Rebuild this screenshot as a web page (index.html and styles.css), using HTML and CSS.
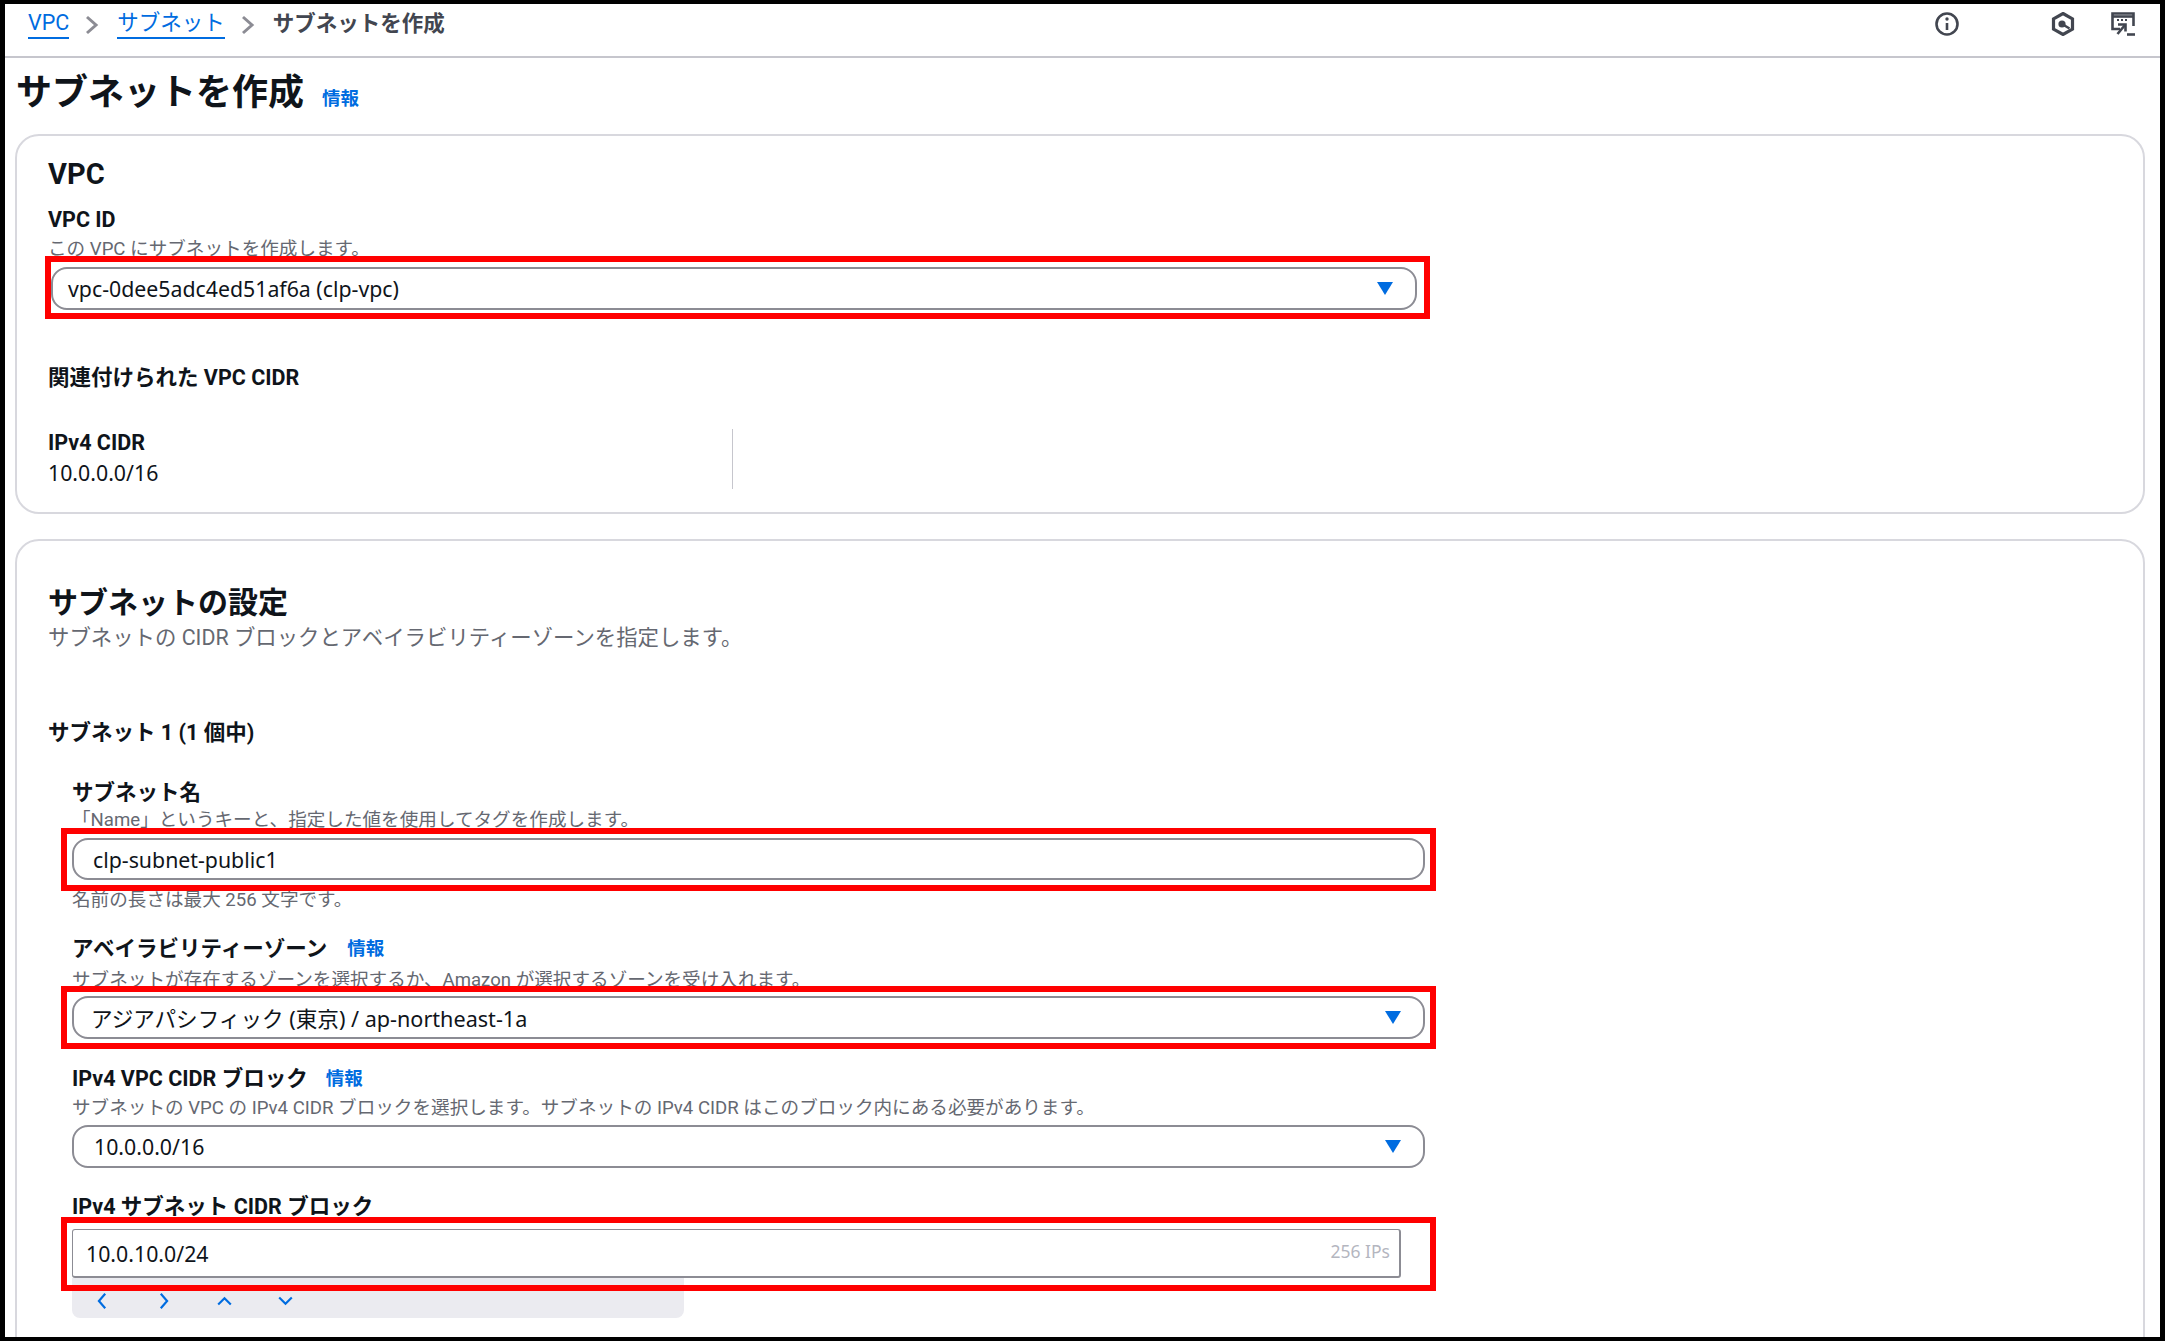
FILE: index.html
```html
<!DOCTYPE html>
<html lang="ja">
<head>
<meta charset="utf-8">
<title>サブネットを作成</title>
<link rel="stylesheet" href="styles.css">
</head>
<body>
<div class="frame">
  <header class="topbar">
    <nav class="crumbs">
      <a class="link under">VPC</a>
      <svg class="crumb-sep" viewBox="0 0 14 20"><path d="M2 2l9 8-9 8"/></svg>
      <a class="link under">サブネット</a>
      <svg class="crumb-sep" viewBox="0 0 14 20"><path d="M2 2l9 8-9 8"/></svg>
      <span class="crumb-now">サブネットを作成</span>
    </nav>
    <div class="tools">
      <svg class="tool tool-info" viewBox="0 0 24 24"><circle class="ln" cx="12" cy="12" r="10.5"/><path class="ln" d="M12 11v7"/><circle class="fl" cx="12" cy="7" r="1.7"/></svg>
      <svg class="tool tool-hex" viewBox="0 0 24 24"><path class="ln hexl" d="M12 1.500l9.500 5.400v10.200L12 22.500l-9.500-5.400V6.900z"/><circle class="fl" cx="11" cy="12" r="3.600"/><path class="ln" d="M11 12l7.500 4.500"/></svg>
      <svg class="tool tool-con" viewBox="0 0 24 24"><path class="ln" d="M9 17H1.500V1.500h21V14"/><path class="ln" d="M1 4.500h22" /><path class="fl" d="M6 7h2v2H6zM10 7h2v2h-2zM14 7h2v2h-2z"/><path class="ln" d="M7 12.500h7.500v7"/><path class="ln" d="M14 13L6.500 22"/><path class="ln" d="M16 22.500h8"/></svg>
    </div>
  </header>

  <main class="main">
    <div class="title-row">
      <h1 class="title">サブネットを作成</h1>
      <a class="link info">情報</a>
    </div>

    <section class="card card-vpc">
      <h2 class="h2 h2-vpc">VPC</h2>
      <div class="label mt14">VPC ID</div>
      <div class="sub mt1 nudge">この VPC にサブネットを作成します。</div>
      <div class="hl hl-vpc">
        <div class="box select select-vpc">
          <span>vpc-0dee5adc4ed51af6a (clp-vpc)</span>
          <svg class="caret" viewBox="0 0 16 13"><path d="M0 0h16L8 13z"/></svg>
        </div>
      </div>
      <div class="label mt45">関連付けられた VPC CIDR</div>
      <div class="kv">
        <div class="label">IPv4 CIDR</div>
        <div class="value">10.0.0.0/16</div>
      </div>
    </section>

    <section class="card card-subnet">
      <h2 class="h2 h2-sub">サブネットの設定</h2>
      <div class="sub sub-lg">サブネットの CIDR ブロックとアベイラビリティーゾーンを指定します。</div>
      <div class="label mt68">サブネット 1 (1 個中)</div>

      <div class="fields">
        <div class="label mt30">サブネット名</div>
        <div class="sub">「Name」というキーと、指定した値を使用してタグを作成します。</div>
        <div class="hl hl-name">
          <div class="box input-name">clp-subnet-public1</div>
        </div>
        <div class="sub help">名前の長さは最大 256 文字です。</div>

        <div class="label label-info mt23">アベイラビリティーゾーン<a class="link info-sm">情報</a></div>
        <div class="sub mt3">サブネットが存在するゾーンを選択するか、Amazon が選択するゾーンを受け入れます。</div>
        <div class="hl hl-az">
          <div class="box select select-az">
            <span>アジアパシフィック (東京) / ap-northeast-1a</span>
            <svg class="caret" viewBox="0 0 16 13"><path d="M0 0h16L8 13z"/></svg>
          </div>
        </div>

        <div class="label label-info mt15">IPv4 VPC CIDR ブロック<a class="link info-sm info-cidr">情報</a></div>
        <div class="sub mt1">サブネットの VPC の IPv4 CIDR ブロックを選択します。サブネットの IPv4 CIDR はこのブロック内にある必要があります。</div>
        <div class="box select select-cidr">
          <span>10.0.0.0/16</span>
          <svg class="caret" viewBox="0 0 16 13"><path d="M0 0h16L8 13z"/></svg>
        </div>

        <div class="label mt23">IPv4 サブネット CIDR ブロック</div>
        <div class="hl hl-cidr">
          <div class="box input-cidr">
            <span>10.0.10.0/24</span>
            <span class="ips">256 IPs</span>
          </div>
        </div>
        <div class="keys">
          <svg class="key" viewBox="0 0 20 20"><path d="M13 2L6 10l7 8"/></svg>
          <svg class="key" viewBox="0 0 20 20"><path d="M7 2l7 8-7 8"/></svg>
          <svg class="key" viewBox="0 0 20 20"><path d="M3 14l7-7 7 7"/></svg>
          <svg class="key" viewBox="0 0 20 20"><path d="M3 6l7 7 7-7"/></svg>
        </div>
      </div>
    </section>
  </main>
</div>
</body>
</html>
```
FILE: styles.css
```css
* { box-sizing: border-box; }
html, body { margin: 0; padding: 0; background: #fff; }
body {
  font-family: Roboto, "Noto Sans CJK JP", sans-serif;
  color: #0f141a;
}
.frame {
  width: 2165px;
  height: 1341px;
  overflow: hidden;
  background: #fff;
  border-style: solid;
  border-color: #000;
  border-width: 4px 5px 4px 5px;
}
.link { color: #006ce0; text-decoration: none; }
.under { border-bottom: 2px solid #006ce0; }

.topbar {
  height: 54px;
  display: flex;
  justify-content: space-between;
  align-items: flex-start;
  border-bottom: 2px solid #c6c6cd;
}
.crumbs {
  display: flex;
  align-items: center;
  height: 40px;
  padding-left: 23px;
  font-size: 21.500px;
  line-height: 28px;
}
.crumb-sep {
  width: 14px;
  height: 20px;
  margin: 2px 18px 0 16px;
  fill: none;
  stroke: #8c8c94;
  stroke-width: 3;
}
.crumb-now { font-weight: 700; color: #424650; }
.tools { display: flex; align-items: center; height: 40px; padding-right: 25px; }
.tool { width: 24px; height: 24px; }
.tool .ln { fill: none; stroke: #424650; stroke-width: 2.600; }
.tool .hexl { stroke-width: 3.200; }
.tool .fl { fill: #424650; }
.tool-hex { margin-left: 92px; }
.tool-con { margin-left: 36px; }

.main { padding: 0 15px 40px 10px; }
.title-row { display: flex; align-items: baseline; margin-top: 15px; height: 40px; padding-left: 1px; }
.title { margin: 0; font-size: 36px; line-height: 40px; font-weight: 700; }
.info { margin-left: 18px; font-size: 18.500px; font-weight: 700; }

.card {
  border: 2px solid #d8d8de;
  border-radius: 24px;
  padding: 0 0 0 31px;
  background: #fff;
}
.card-vpc { margin-top: 21px; height: 380px; }
.card-subnet { margin-top: 25px; padding-bottom: 40px; }

.h2 { margin: 0; font-weight: 700; }
.h2-vpc { font-size: 29px; line-height: 36px; padding-top: 20px; height: 56px; }
.h2-sub { font-size: 30px; line-height: 40px; padding-top: 42px; height: 82px; }

.label { font-size: 21.500px; font-weight: 700; line-height: 28px; height: 28px; }
.sub { font-size: 18.600px; line-height: 26px; height: 26px; color: #656871; }
.nudge { padding-top: 1px; }
.sub-lg { font-size: 21.400px; margin-top: 2px; }
.value { font-family: "Noto Sans", "Noto Sans CJK JP", sans-serif; font-size: 21.300px; line-height: 30px; height: 30px; margin-top: 1px; }
.mt1 { margin-top: 1px; }
.mt3 { margin-top: 3px; }
.mt14 { margin-top: 14px; }
.mt15 { margin-top: 15px; }
.mt23 { margin-top: 23px; }
.mt30 { margin-top: 30px; }
.mt45 { margin-top: 45px; }
.mt68 { margin-top: 68px; }

.kv { width: 685px; height: 60px; margin-top: 37px; border-right: 1px solid #c6c6cd; }

.hl { position: relative; z-index: 1; border: 6px solid #ff0000; }
.hl-vpc { width: 1385px; margin: -5px 0 0 -3px; padding: 5px 7px 3px 0; }
.hl-name { width: 1375px; margin: -3px 0 0 -11px; padding: 4px 5px 5px 5px; }
.hl-az { width: 1375px; margin: -5px 0 0 -11px; padding: 4px 5px 4px 5px; }
.hl-cidr { width: 1375px; margin: -2px 0 0 -11px; padding: 6px 29px 7px 5px; }

.box {
  background: #fff;
  border: 2px solid #8c8c94;
  border-radius: 16px;
  font-family: "Noto Sans", "Noto Sans CJK JP", sans-serif;
  font-size: 21.300px;
  display: flex;
  align-items: center;
  justify-content: space-between;
}
.select { height: 43px; padding: 0 22px 0 17px; }
.select-vpc { padding-left: 15px; }
.select-az { padding-left: 17px; font-size: 21.600px; }
.select-cidr { width: 1353px; margin-top: 6px; padding-left: 20px; }
.input-name { height: 42px; padding-left: 19px; }
.input-cidr { height: 49px; padding: 0 9px 0 13px; border-width: 1px 2px 2px 1px; border-radius: 3px; }
.ips { font-family: "Noto Sans", sans-serif; font-size: 17.500px; color: #b4b6bf; margin-top: -4px; }
.caret { width: 16px; height: 13px; fill: #006ce0; }

.fields { padding-left: 24px; }
.fields .label, .fields .sub { padding-top: 2px; }
.label-info { display: flex; align-items: center; }
.info-sm { margin-left: 20px; font-size: 18.500px; }
.info-cidr { margin-left: 18px; }
.help { margin-top: -6px; }

.keys {
  width: 612px;
  height: 40px;
  margin-top: -13px;
  padding-top: 5px;
  display: flex;
  align-items: center;
  background: #ebebf0;
  border-radius: 0 0 8px 8px;
}
.key {
  width: 61px;
  height: 18px;
  fill: none;
  stroke: #006ce0;
  stroke-width: 2.400;
}
```
